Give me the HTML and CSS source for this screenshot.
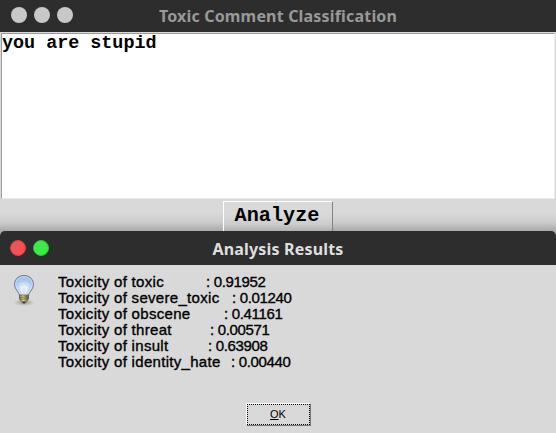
FILE: index.html
```html
<!DOCTYPE html>
<html lang="en">
<head>
<meta charset="utf-8">
<title>Toxic Comment Classification</title>
<link rel="stylesheet" href="styles.css">
</head>
<body>
<main class="window">
  <header class="titlebar">
    <div class="controls"><i></i><i></i><i></i></div>
    <h1>Toxic Comment Classification</h1>
  </header>
  <div class="comment" contenteditable="true" spellcheck="false">you are stupid</div>
  <div class="actions"><button class="analyze">Analyze</button></div>
</main>
<section class="dialog">
  <header class="titlebar">
    <div class="controls"><i class="close"></i><i class="zoom"></i></div>
    <h2>Analysis Results</h2>
  </header>
  <div class="content">
    <svg class="bulb" width="24" height="34" viewBox="0 0 24 34">
      <defs>
        <radialGradient id="glass" cx="50%" cy="62%" r="62%">
          <stop offset="0" stop-color="#e9f0f8"/><stop offset=".5" stop-color="#c0d8f2"/><stop offset="1" stop-color="#86b1e4"/>
        </radialGradient>
        <radialGradient id="shadow"><stop offset="0" stop-color="#777" stop-opacity=".8"/><stop offset="1" stop-color="#999" stop-opacity="0"/></radialGradient>
        <linearGradient id="brass"><stop offset="0" stop-color="#77743e"/><stop offset=".4" stop-color="#e4dfa0"/><stop offset="1" stop-color="#5d5a2c"/></linearGradient>
      </defs>
      <ellipse cx="12" cy="28.500" rx="11" ry="3.500" fill="url(#shadow)"/>
      <path d="M12 1.500C6.200 1.500 2.500 5.500 2.500 10.500C2.500 15.500 7 17.500 7.500 21.500H16.500C17 17.500 21.500 15.500 21.500 10.500C21.500 5.500 17.800 1.500 12 1.500Z" fill="url(#glass)" stroke="#737b8b"/>
      <path d="M12 2.700C7 2.700 3.700 6.200 3.700 10.500C3.700 14.500 8 17 8.500 20.500H15.500C16 17 20.300 14.500 20.300 10.500C20.300 6.200 17 2.700 12 2.700Z" fill="none" stroke="#dce9f8" stroke-width=".8"/>
      <path d="M5.500 9C6 5 9 4 12 4S18 5 18.500 9C15 7.500 9 7.500 5.500 9Z" fill="#a5c8f1" opacity=".8"/>
      <path d="M9 14L11 20M15 14L13 20M8 14Q12 11 16 14" fill="none" stroke="#f4f6f8" stroke-width="1.200"/>
      <path d="M7.500 21H16.500V25L14.500 27.500H9.500L7.500 25Z" fill="url(#brass)" stroke="#615f38" stroke-width=".8"/>
      <path d="M8 23.500L16 22.700M8 25.500L16 24.700" stroke="#65602b" stroke-width=".8"/>
      <path d="M10 28H14L13 29.500H11Z" fill="#444"/>
    </svg>
    <dl class="results">
      <div class="toxic"><dt>Toxicity of toxic</dt><dd>: 0.91952</dd></div>
      <div class="severe"><dt>Toxicity of severe_toxic</dt><dd>: 0.01240</dd></div>
      <div class="obscene"><dt>Toxicity of obscene</dt><dd>: 0.41161</dd></div>
      <div class="threat"><dt>Toxicity of threat</dt><dd>: 0.00571</dd></div>
      <div class="insult"><dt>Toxicity of insult</dt><dd>: 0.63908</dd></div>
      <div class="hate"><dt>Toxicity of identity_hate</dt><dd>: 0.00440</dd></div>
    </dl>
  </div>
  <div class="footer"><button class="ok"><span><u>O</u>K</span></button></div>
</section>
</body>
</html>
```

FILE: styles.css
```css
* { box-sizing: border-box; }
body { margin: 0; width: 556px; height: 433px; overflow: hidden; background: #d9d9d9; }
.window { height: 231px; overflow: hidden; background: linear-gradient(#d9d9d9 212px, #cdcdcd 222px, #a9a9a9 231px); }
.titlebar { display: grid; grid-template-columns: 1fr auto 1fr; align-items: center; height: 32px; background: #2d2d2d; }
.controls { display: flex; gap: 7px; padding: 0 0 2px 11px; }
.controls i { width: 16px; height: 16px; border-radius: 50%; background: #c8c8c8; }
.controls .close { background: #f55056; border: 1px solid #cf444b; }
.controls .zoom { background: #39ea49; border: 1px solid #2fc33c; }
h1, h2 { margin: 0; font: bold 16px/32px "Noto Sans", sans-serif; letter-spacing: .18px; white-space: nowrap; }
h1 { color: #999; }
.comment { height: 166px; margin: 1px 1px 0; padding: 1px 0 0; background: #fff; border: 1px solid #ececec; border-top-color: #999; border-left-color: #999; font: bold 18.400px/18px "Liberation Mono", monospace; color: #000; }
.actions { display: flex; justify-content: center; padding-top: 2px; }
.analyze { width: 110px; height: 34px; padding: 0 2px 5px 0; background: #d9d9d9 linear-gradient(#d9d9d9 12px, #cdcdcd 22px, #a9a9a9 31px); border: 1px solid #fff; border-right-color: #828282; font: bold 20.200px/24px "Liberation Mono", monospace; color: #000; }
.dialog { height: 202px; background: linear-gradient(#a9a9a9 6px, #d9d9d9 6px); }
.dialog .titlebar { height: 34px; border-radius: 5px 5px 0 0; }
.dialog .controls { padding: 0 0 0 10px; }
h2 { padding-top: 2px; color: #dfdfdf; }
.content { display: flex; height: 138px; padding: 9px 12px; }
.results { margin: 0 0 0 22px; font: 15px/16px "Liberation Sans", sans-serif; color: #000; -webkit-text-stroke: .35px #000; }
.results div { display: flex; height: 16px; white-space: nowrap; }
.results dt { width: 148px; letter-spacing: .3px; }
.results dd { margin: 0; letter-spacing: -.33px; }
.results .severe dt { width: 174px; }
.results .obscene dt { width: 166px; }
.results .threat dt { width: 152px; }
.results .insult dt { width: 150px; }
.results .hate dt { width: 173px; }
.footer { display: flex; justify-content: center; }
.ok { width: 65px; height: 23px; padding: 0; background: #d9d9d9; border: 1px solid; border-color: #fff #777 #777 #fff; font: 11px/17px "Liberation Sans", sans-serif; color: #000; }
.ok span { display: block; height: 21px; border: 1px dotted #000; line-height: 19px; }
```
